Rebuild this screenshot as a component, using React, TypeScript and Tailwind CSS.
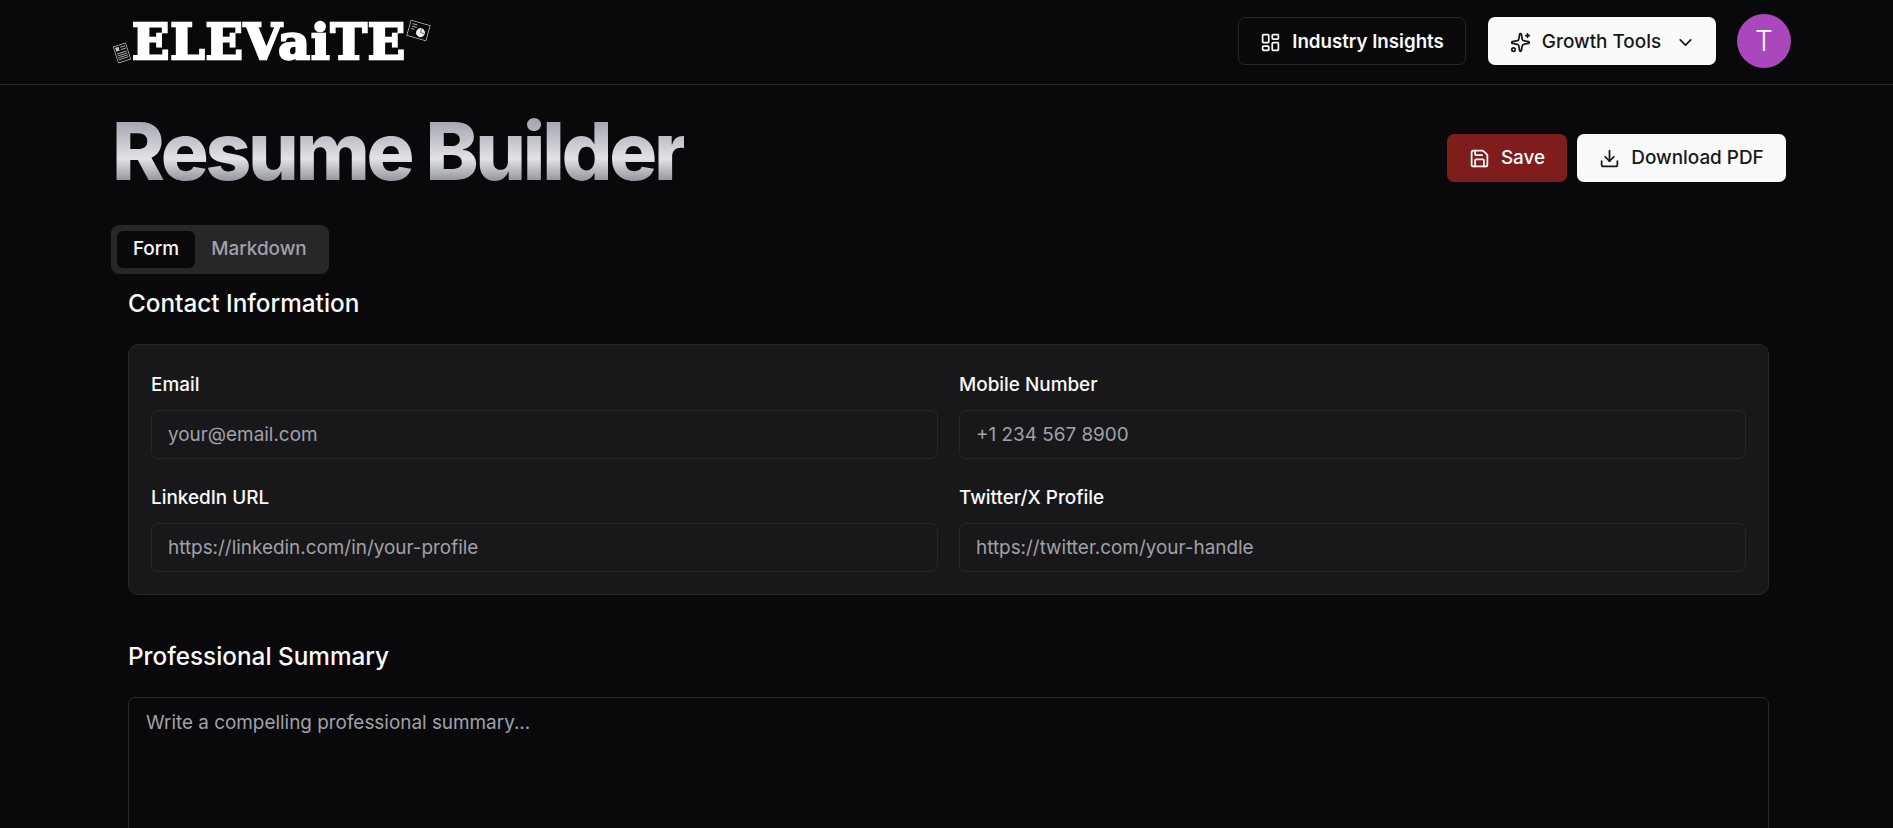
import { ChevronDown, Download, LayoutDashboard, Save, Sparkles } from "lucide-react";

// little rotated resume sheet left of the wordmark
const DocMark = () => (
  <svg viewBox="0 0 14 18" className="w-[14px] h-[18px] mt-[44px] -rotate-[18deg] shrink-0" fill="none" stroke="#c4c4c4" strokeWidth="0.8">
    <rect x="0.5" y="0.5" width="13" height="17" />
    <rect x="2" y="2" width="3.5" height="4" fill="#c4c4c4" stroke="none" />
    <path d="M7 3h5M7 5.5h5M2 8.5h10M2 10.5h10M2 12.5h10M2 14.5h10" />
  </svg>
);

// tilted chart card on the right of the wordmark
const ChartMark = () => (
  <svg viewBox="0 0 21 17" className="w-[21px] h-[17px] mt-[22px] rotate-[16deg] shrink-0" fill="none" stroke="#b5b5b5" strokeWidth="0.9">
    <rect x="0.5" y="0.5" width="20" height="16" />
    <path d="M3 3.5h5M3 6h5M3 8.5h3" />
    <circle cx="13" cy="10" r="4.5" fill="#eeeeee" stroke="none" />
    <path d="M13 10V6M13 10h4" stroke="#444444" strokeWidth="0.7" />
  </svg>
);

const Field = ({ label, placeholder }: { label: string; placeholder: string }) => (
  <div>
    <label className="block h-[20px] leading-[20px] text-[18.9px] font-medium text-[#fafafa]">{label}</label>
    <input
      placeholder={placeholder}
      className="block mt-[15px] w-full h-[49px] px-[16px] rounded-[7px] border border-[#27272a] bg-transparent text-[18.9px] outline-none placeholder:text-[#a1a1aa]"
    />
  </div>
);

export default function App() {
  return (
    <div className="h-screen overflow-hidden bg-[#09090b] text-[#fafafa] font-['Inter',sans-serif]">
      <header className="h-[85px] border-b border-[#27272a] pl-[115px] pr-[102px] flex items-center justify-between">
        <div className="flex h-[84px] items-start">
          <DocMark />
          <span className="mt-[10px] ml-[3px] w-[276px] text-[49px] leading-[64px] font-bold text-white tracking-[0.9px] font-['DejaVu_Serif',serif] [-webkit-text-stroke:2.5px_white] whitespace-nowrap">
            ELEVaiTE
          </span>
          <ChartMark />
        </div>

        <div className="flex items-center mb-[2px]">
          <button className="flex items-center justify-center w-[228px] h-[48px] pt-[2px] rounded-[7px] border border-[#27272a] text-[18.7px] font-semibold gap-[11px]">
            <LayoutDashboard className="w-[21px] h-[21px]" />
            Industry Insights
          </button>
          <button className="ml-[22px] flex items-center justify-center w-[228px] h-[48px] pt-[2px] pl-[2px] rounded-[7px] bg-[#fafafa] text-[#18181b] text-[18.9px] font-medium gap-[11px]">
            <Sparkles className="w-[21px] h-[21px]" />
            Growth Tools
            <ChevronDown className="w-[21px] h-[21px] ml-[3px]" />
          </button>
          <div className="ml-[21px] w-[54px] h-[54px] rounded-full bg-[#ab47bc] flex items-center justify-center text-[28px] font-light text-white">
            T
          </div>
        </div>
      </header>

      <main className="pl-[111px] pr-[107px]">
        <div className="flex items-end justify-between pt-[18px]">
          <h1 className="pl-[1px] text-[80px] leading-[96px] font-extrabold tracking-[-3.3px] bg-linear-to-b from-[#a5a8b2] from-20% via-[#e2e3e7] via-58% to-[#94979e] to-81% bg-clip-text text-transparent">
            Resume Builder
          </h1>
          <div className="flex gap-[10px] mb-[17px]">
            <button className="flex items-center justify-center gap-[11px] w-[120px] h-[48px] rounded-[7px] bg-[#7f1d1d] text-[18.9px] font-medium">
              <Save className="w-[21px] h-[21px]" />
              Save
            </button>
            <button className="flex items-center justify-center gap-[11px] w-[209px] h-[48px] rounded-[7px] bg-[#fafafa] text-[#18181b] text-[18.9px] font-medium">
              <Download className="w-[21px] h-[21px]" />
              Download PDF
            </button>
          </div>
        </div>

        <div className="mt-[26px] flex w-[218px] h-[49px] p-[6px] rounded-[8px] bg-[#27272a] text-[18.9px] font-medium">
          <div className="w-[78px] rounded-[6px] bg-[#09090b] flex items-center justify-center">Form</div>
          <div className="flex-1 flex items-center justify-center text-[#a1a1aa]">Markdown</div>
        </div>

        <div className="px-[17px]">
          <h2 className="mt-[13px] h-[32px] leading-[32px] text-[24.3px] font-medium">Contact Information</h2>
          <section className="mt-[25px] h-[251px] rounded-[10px] border border-[#27272a] bg-[#18181b] px-[22px] pt-[30px] grid grid-cols-2 gap-x-[21px] gap-y-[29px] content-start">
            <Field label="Email" placeholder="your@email.com" />
            <Field label="Mobile Number" placeholder="+1 234 567 8900" />
            <Field label="LinkedIn URL" placeholder="https://linkedin.com/in/your-profile" />
            <Field label="Twitter/X Profile" placeholder="https://twitter.com/your-handle" />
          </section>

          <h2 className="mt-[45px] h-[32px] leading-[32px] text-[24.3px] font-medium">Professional Summary</h2>
          <textarea
            placeholder="Write a compelling professional summary..."
            className="block mt-[25px] w-full h-[300px] px-[17px] py-[11px] rounded-[7px] border border-[#27272a] bg-transparent text-[18.9px] outline-none resize-none placeholder:text-[#a1a1aa]"
          />
        </div>
      </main>
    </div>
  );
}
